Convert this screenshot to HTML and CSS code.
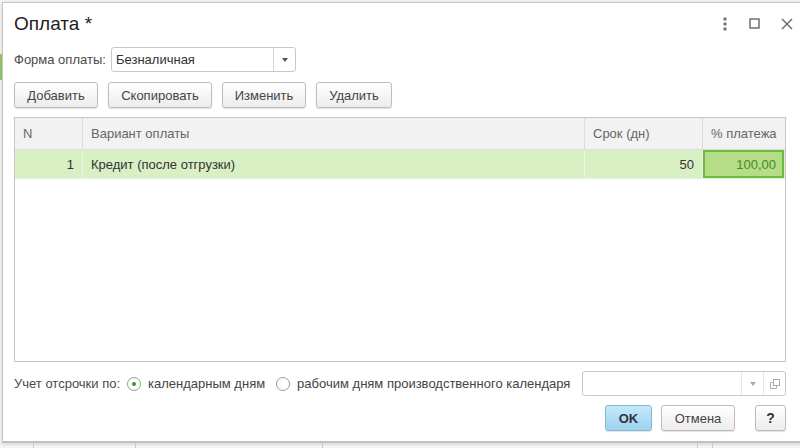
FILE: index.html
```html
<!DOCTYPE html>
<html lang="ru">
<head>
<meta charset="utf-8">
<link rel="stylesheet" href="styles.css">
</head>
<body>
<div class="desk">
  <div class="dialog">
    <div class="titlebar">
      <div class="title">Оплата *</div>
      <div class="win-icons">
        <svg class="ic-kebab" width="6" height="14" viewBox="0 0 6 14"><rect x="1.5" y="0.5" width="3" height="3" fill="#777"/><rect x="1.5" y="5.5" width="3" height="3" fill="#777"/><rect x="1.5" y="10.5" width="3" height="3" fill="#777"/></svg>
        <svg class="ic-max" width="11" height="11" viewBox="0 0 11 11"><rect x="1" y="1" width="9" height="9" fill="none" stroke="#666" stroke-width="1.4"/></svg>
        <svg class="ic-close" width="12" height="12" viewBox="0 0 12 12"><path d="M1 1L11 11M11 1L1 11" stroke="#666" stroke-width="1.4"/></svg>
      </div>
    </div>
    <div class="content">
      <div class="form-row">
        <span class="label">Форма оплаты:</span>
        <div class="select">
          <span class="select-text">Безналичная</span>
          <span class="select-btn"><svg width="6" height="4" viewBox="0 0 6 4"><path d="M0 0H6L3 4Z" fill="#555"/></svg></span>
        </div>
      </div>
      <div class="toolbar">
        <button class="btn w-add">Добавить</button>
        <button class="btn w-copy">Скопировать</button>
        <button class="btn w-edit">Изменить</button>
        <button class="btn w-del">Удалить</button>
      </div>
      <div class="table">
        <div class="row head">
          <div class="cell c-n">N</div>
          <div class="cell c-name">Вариант оплаты</div>
          <div class="cell c-days">Срок (дн)</div>
          <div class="cell c-pct">% платежа</div>
        </div>
        <div class="row sel">
          <div class="cell c-n num">1</div>
          <div class="cell c-name">Кредит (после отгрузки)</div>
          <div class="cell c-days num">50</div>
          <div class="cell c-pct num active">100,00</div>
        </div>
      </div>
      <div class="opts-row">
        <span class="label">Учет отсрочки по:</span>
        <span class="radio on"></span>
        <span class="opt">календарным дням</span>
        <span class="radio"></span>
        <span class="opt">рабочим дням производственного календаря</span>
        <div class="select cal">
          <span class="select-text"></span>
          <span class="select-btn light"><svg width="6" height="4" viewBox="0 0 6 4"><path d="M0 0H6L3 4Z" fill="#aaa"/></svg></span>
          <span class="select-btn light"><svg width="10" height="10" viewBox="0 0 10 10"><rect x="3.5" y="0.5" width="6" height="6" fill="none" stroke="#aaa"/><path d="M3.5 3.5H0.5V9.5H6.5V6.5" fill="none" stroke="#aaa"/></svg></span>
        </div>
      </div>
      <div class="footer">
        <button class="btn ok">OK</button>
        <button class="btn cancel">Отмена</button>
        <button class="btn help">?</button>
      </div>
    </div>
  </div>
  <div class="under">
    <span class="l1"></span><span class="l2"></span><span class="l3"></span><span class="l4"></span><span class="l5"></span>
  </div>
</div>
</body>
</html>
```
FILE: styles.css
```css
html, body {
  margin: 0;
  padding: 0;
  overflow: hidden;
}
body {
  width: 800px;
  height: 448px;
  background: #f4f4f4;
  font-family: "Liberation Sans", Arial, sans-serif;
  font-size: 13px;
  color: #333;
}
.desk {
  position: relative;
  width: 800px;
  height: 448px;
  padding: 2px 0 0 2px;
  box-sizing: border-box;
  background: linear-gradient(#f4f4f4, #f4f4f4);
}
.desk::before {
  content: "";
  position: absolute;
  left: 0;
  top: 54px;
  width: 2px;
  height: 26px;
  background: #8cc060;
}
.dialog {
  width: 820px;
  height: 441px;
  box-sizing: border-box;
  border: 1px solid #c4c4c4;
  border-bottom: 2px solid #c0c0c0;
  background: #fff;
  box-shadow: 0 1px 3px rgba(0,0,0,0.15);
}
.titlebar {
  height: 41px;
  display: flex;
  align-items: center;
  padding-left: 11px;
  width: 790px;
  box-sizing: border-box;
}
.title {
  font-size: 19px;
  color: #222;
  flex: 1;
  padding-top: 1px;
}
.win-icons {
  display: flex;
  align-items: center;
}
.ic-kebab { margin-right: 21px; }
.ic-max { margin-right: 21px; }
.content {
  padding-left: 11px;
  width: 772px;
}
.label {
  color: #4a4a4a;
}
.form-row {
  display: flex;
  align-items: center;
  height: 25px;
  margin-top: 3px;
}
.form-row .label {
  width: 97px;
}
.select {
  display: flex;
  height: 25px;
  box-sizing: border-box;
  border: 1px solid #c8c8c8;
  border-radius: 3px;
  background: #fff;
}
.form-row .select { width: 185px; }
.select-text {
  flex: 1;
  padding-left: 4px;
  line-height: 23px;
  color: #333;
}
.select-btn {
  width: 21px;
  border-left: 1px solid #d6d6d6;
  display: flex;
  align-items: center;
  justify-content: center;
}
.select-btn.light { border-left-color: #e6e6e6; }
.toolbar {
  display: flex;
  gap: 10px;
  margin-top: 10px;
  height: 26px;
}
.btn {
  height: 26px;
  box-sizing: border-box;
  border: 1px solid #bdbdbd;
  border-radius: 3px;
  background: linear-gradient(#ffffff, #ececec);
  box-shadow: 0 1px 1px rgba(0,0,0,0.12);
  font-family: "Liberation Sans", Arial, sans-serif;
  font-size: 13px;
  color: #444;
  padding: 0;
  margin: 0;
}
.w-add { width: 84px; }
.w-copy { width: 104px; }
.w-edit { width: 84px; }
.w-del { width: 76px; }
.table {
  margin-top: 9px;
  height: 245px;
  box-sizing: border-box;
  border: 1px solid #c6c6c6;
  background: #fff;
}
.row {
  display: flex;
}
.row.head {
  height: 31px;
  background: #f2f2f2;
  border-bottom: 1px solid #dcdcdc;
  color: #666;
}
.row.sel {
  height: 28px;
  background: #d9efc4;
  border-bottom: 1px solid #e6eee0;
  color: #333;
}
.cell {
  box-sizing: border-box;
  display: flex;
  align-items: center;
  padding: 0 8px;
  border-right: 1px solid #dcdcdc;
}
.row.sel .cell { border-right-color: #eaf5df; }
.c-n { width: 68px; }
.c-name { width: 502px; }
.c-days { width: 118px; }
.c-pct { flex: 1; border-right: none; }
.num { justify-content: flex-end; }
.row.sel .c-pct.active {
  background: #b5dc86;
  border: 2px solid #6dbb3c;
  color: #4a8a2a;
  padding-right: 6px;
  margin: 0 1px 0 0;
}
.opts-row {
  display: flex;
  align-items: center;
  height: 25px;
  margin-top: 9px;
}
.opts-row .label { margin-right: 7px; }
.radio {
  width: 14px;
  height: 14px;
  box-sizing: border-box;
  border: 1px solid #9a9a9a;
  border-radius: 50%;
  background: #fff;
  position: relative;
  margin-right: 7px;
}
.radio.on::after {
  content: "";
  position: absolute;
  left: 4px;
  top: 4px;
  width: 4px;
  height: 4px;
  border-radius: 50%;
  background: #2e9e1e;
}
.opt { color: #444; margin-right: 11px; }
.select.cal {
  margin-left: auto;
  width: 204px;
}
.footer {
  display: flex;
  justify-content: flex-end;
  margin-top: 9px;
  height: 26px;
}
.btn.ok {
  width: 47px;
  background: linear-gradient(#c4e8fa, #9dd3ef);
  border-color: #86b8d2;
  color: #333;
  font-weight: bold;
  font-size: 13px;
  margin-right: 9px;
}
.btn.cancel { width: 74px; margin-right: 20px; }
.btn.help { width: 31px; font-weight: bold; color: #333; font-size: 14px; }
.under {
  position: absolute;
  left: 0;
  top: 444px;
  width: 800px;
  height: 4px;
}
.under span {
  position: absolute;
  top: 0;
  width: 1px;
  height: 4px;
  background: #c8c8c8;
}
.under .l1 { left: 33px; }
.under .l2 { left: 135px; }
.under .l3 { left: 322px; }
.under .l4 { left: 697px; }
.under .l5 { left: 712px; }
```
